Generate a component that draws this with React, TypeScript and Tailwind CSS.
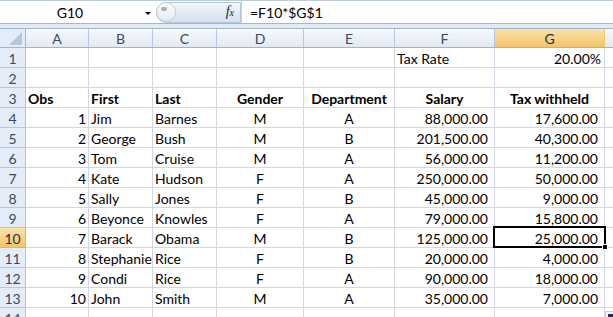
import React from "react";

type Align = "l" | "c" | "r" | "n" | "p";
type Cell = [string, Align];

const colWidths = [
  "w-[63px]",
  "w-[64px]",
  "w-[64px]",
  "w-[87px]",
  "w-[91px]",
  "w-[100px]",
  "w-[110px]",
];
const colLetters = ["A", "B", "C", "D", "E", "F", "G"];

const alignClass: Record<Align, string> = {
  l: "justify-start pl-[2px]",
  c: "justify-center",
  r: "justify-end pr-[2px]",
  n: "justify-end pr-[6px]",
  p: "justify-end pr-[3px]",
};

const people: [number, string, string, string, string, string, string][] = [
  [1, "Jim", "Barnes", "M", "A", "88,000.00", "17,600.00"],
  [2, "George", "Bush", "M", "B", "201,500.00", "40,300.00"],
  [3, "Tom", "Cruise", "M", "A", "56,000.00", "11,200.00"],
  [4, "Kate", "Hudson", "F", "A", "250,000.00", "50,000.00"],
  [5, "Sally", "Jones", "F", "B", "45,000.00", "9,000.00"],
  [6, "Beyonce", "Knowles", "F", "A", "79,000.00", "15,800.00"],
  [7, "Barack", "Obama", "M", "B", "125,000.00", "25,000.00"],
  [8, "Stephanie", "Rice", "F", "B", "20,000.00", "4,000.00"],
  [9, "Condi", "Rice", "F", "A", "90,000.00", "18,000.00"],
  [10, "John", "Smith", "M", "A", "35,000.00", "7,000.00"],
];

const empty: Cell[] = colLetters.map(() => ["", "l"] as Cell);

const rows: { cells: Cell[]; bold?: boolean }[] = [
  {
    cells: [
      ["", "l"],
      ["", "l"],
      ["", "l"],
      ["", "l"],
      ["", "l"],
      ["Tax Rate", "l"],
      ["20.00%", "p"],
    ],
  },
  { cells: empty },
  {
    bold: true,
    cells: [
      ["Obs", "l"],
      ["First", "l"],
      ["Last", "l"],
      ["Gender", "c"],
      ["Department", "c"],
      ["Salary", "c"],
      ["Tax withheld", "c"],
    ],
  },
  ...people.map((p) => ({
    cells: [
      [String(p[0]), "r"],
      [p[1], "l"],
      [p[2], "l"],
      [p[3], "c"],
      [p[4], "c"],
      [p[5], "n"],
      [p[6], "n"],
    ] as Cell[],
  })),
  { cells: empty },
];

function FormulaBar() {
  return (
    <div className="flex h-[28px] flex-col bg-[#e4eaf2]">
      <div className="h-px bg-[#bccbdd]" />
      <div className="flex h-[23px] border-b border-[#a7b7ca] bg-white">
        <div className="relative flex w-[156px] items-end justify-center pb-[3px] text-[14px] leading-[14px] text-black">
          <span className="mr-[16px]">G10</span>
          <span className="absolute right-[5px] top-[11px] h-0 w-0 border-x-[3px] border-t-[3px] border-x-transparent border-t-black" />
        </div>
        <div className="my-auto flex h-[21px] w-[85px] items-center rounded-l-full border border-[#b4c6dc] bg-gradient-to-b from-[#f3f7fc] to-[#d3e0f0]">
          <div className="relative ml-[-1px] h-[20px] w-[20px] rounded-full border border-[#c3cbd5] bg-gradient-to-b from-[#fbfcfe] to-[#e4ebf3]">
            <span className="absolute left-[4px] top-[4px] h-[4px] w-[6px] rounded-full bg-[#a8afb8]" />
          </div>
          <span className="ml-auto mr-[6px] font-['Liberation_Serif',serif] text-[14px] italic leading-none text-[#222]">
            f<span className="text-[10px]">x</span>
          </span>
        </div>
        <div className="flex flex-1 items-end border-l border-[#c9d3de] pb-[3px] pl-[8px] text-[14px] leading-[14px] text-black">
          =F10*$G$1
        </div>
      </div>
      <div className="h-[4px]" />
    </div>
  );
}

function Corner() {
  return (
    <div className="relative h-full w-[26px] border-r border-[#9eb6ce] bg-[#e4ecf7]">
      <svg className="absolute bottom-[2px] right-[3px]" width="13" height="13" viewBox="0 0 13 13">
        <polygon points="13,0 13,13 0,13" fill="#b7c7db" />
      </svg>
    </div>
  );
}

function HeaderRow() {
  return (
    <div className="flex h-[20px] border-b border-t border-[#9eb6ce]">
      <Corner />
      {colLetters.map((l, i) => {
        const sel = l === "G";
        return (
          <div
            key={l}
            className={
              colWidths[i] +
              " flex items-end justify-center border-r pb-px text-[14px] leading-[14px] " +
              (sel
                ? "border-[#f2c46d] bg-gradient-to-b from-[#fbe2a9] to-[#f2c466] text-[#1f2f3f]"
                : "border-[#b5c7dc] bg-gradient-to-b from-[#f7f9fc] to-[#e2e9f3] text-[#3a4a5c]")
            }
          >
            {l}
          </div>
        );
      })}
      <div className="flex-1 bg-gradient-to-b from-[#f7f9fc] to-[#e2e9f3]" />
    </div>
  );
}

function DataRow({ n, cells, bold }: { n: number; cells: Cell[]; bold?: boolean }) {
  const selRow = n === 10;
  return (
    <div className={"relative flex h-[20px] shrink-0" + (selRow ? " z-10" : "")}>
      <div
        className={
          "flex w-[26px] items-end justify-center border-b border-r pb-px text-[14px] leading-[14px] " +
          (selRow
            ? "border-[#e7b558] bg-gradient-to-b from-[#fbe2a9] to-[#f2c466] text-[#1f2f3f]"
            : "border-[#b5c7dc] bg-[#e4ecf7] text-[#3a4a5c]")
        }
      >
        {n}
      </div>
      {cells.map(([text, a], i) => (
        <div
          key={i}
          className={
            colWidths[i] +
            " flex items-end overflow-x-clip whitespace-nowrap border-b border-r border-[#d0d7e5] pb-px text-[14px] leading-[14px] text-black " +
            alignClass[a] +
            (bold ? " font-bold" : "")
          }
        >
          {text}
        </div>
      ))}
      <div className="flex-1 border-b border-[#d0d7e5]" />
      {selRow ? (
        <div className="pointer-events-none absolute left-[493px] -top-[2px] h-[22px] w-[113px] border-2 border-black">
          <span className="absolute -bottom-[4px] -right-[4px] h-[6px] w-[6px] border border-white bg-black" />
        </div>
      ) : null}
    </div>
  );
}

export default function App() {
  return (
    <div className="relative h-[317px] w-[613px] overflow-hidden bg-white font-['Lato',sans-serif]">
      <FormulaBar />
      <HeaderRow />
      {rows.map((r, i) => (
        <DataRow key={i} n={i + 1} cells={r.cells} bold={r.bold} />
      ))}
      <div className="absolute left-[605px] top-[311px] z-20 h-[10px] w-[12px] border border-[#c8cfd8] bg-[#f4f6f9]">
        <span className="absolute left-[2px] top-[2px] h-[4px] w-[5px] bg-[#1c2a78]" />
      </div>
    </div>
  );
}
